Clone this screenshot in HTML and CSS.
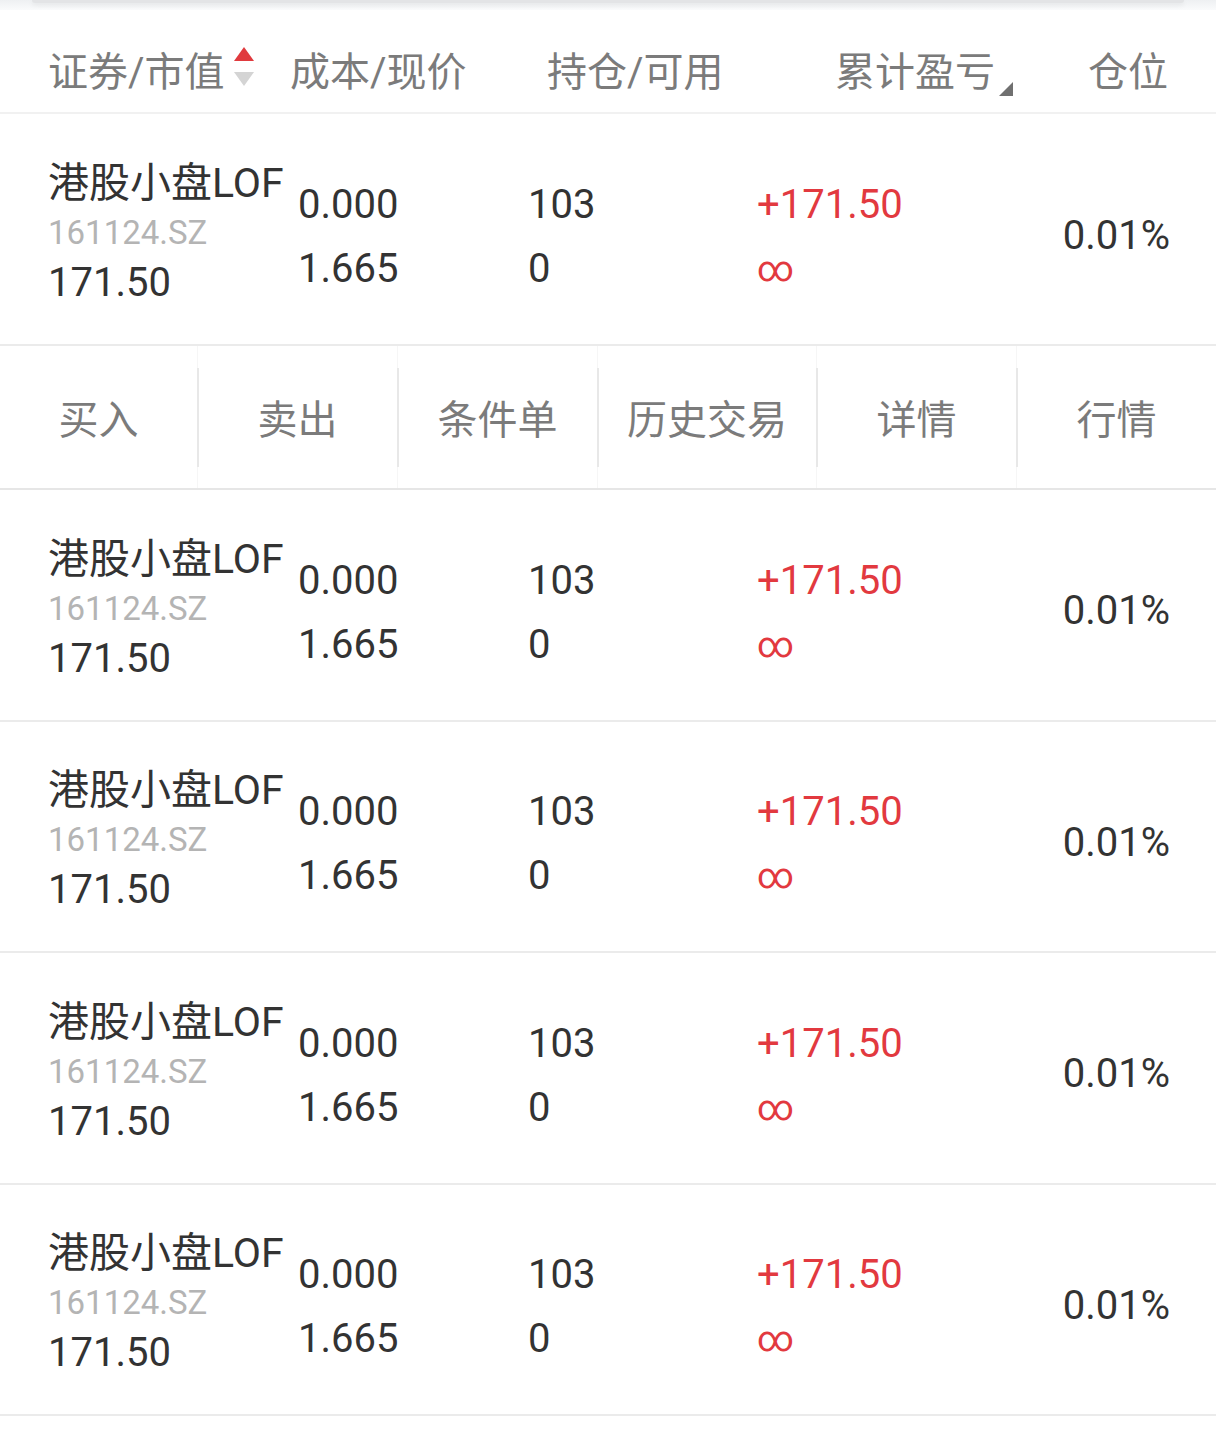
FILE: index.html
```html
<!DOCTYPE html>
<html lang="zh-CN">
<head>
    <meta charset="UTF-8">
    <meta name="viewport" content="width=device-width, initial-scale=1.0">
    <title>持仓</title>
    <link rel="stylesheet" href="styles.css">
</head>
<body>
    <div class="top-edge">
        <div class="card-bottom"></div>
    </div>

    <div class="table-head">
        <div class="head-cell">
            证券/市值
            <svg class="sort-icon" width="22" height="40" viewBox="0 0 22 40">
                <polygon points="11,0 21,14 1,14" fill="#e03a3e"/>
                <polygon points="1,25 21,25 11,39" fill="#d4d4d4"/>
            </svg>
        </div>
        <div class="head-cell">成本/现价</div>
        <div class="head-cell">持仓/可用</div>
        <div class="head-cell">
            累计盈亏<svg class="corner-icon" width="14" height="14" viewBox="0 0 14 14">
                <polygon points="14,0 14,14 0,14" fill="#707070"/>
            </svg>
        </div>
        <div class="head-cell">仓位</div>
    </div>

    <div class="row first">
        <div class="col-name">
            <div class="name">港股小盘LOF</div>
            <div class="code">161124.SZ</div>
            <div class="value">171.50</div>
        </div>
        <div class="col-pair">
            <div>0.000</div>
            <div>1.665</div>
        </div>
        <div class="col-pair">
            <div>103</div>
            <div>0</div>
        </div>
        <div class="col-pair profit">
            <div>+171.50</div>
            <div class="inf">∞</div>
        </div>
        <div class="col-ratio">0.01%</div>
    </div>

    <div class="actions">
        <div class="action">买入</div>
        <div class="action">卖出</div>
        <div class="action">条件单</div>
        <div class="action">历史交易</div>
        <div class="action">详情</div>
        <div class="action">行情</div>
    </div>

    <div class="row">
        <div class="col-name">
            <div class="name">港股小盘LOF</div>
            <div class="code">161124.SZ</div>
            <div class="value">171.50</div>
        </div>
        <div class="col-pair">
            <div>0.000</div>
            <div>1.665</div>
        </div>
        <div class="col-pair">
            <div>103</div>
            <div>0</div>
        </div>
        <div class="col-pair profit">
            <div>+171.50</div>
            <div class="inf">∞</div>
        </div>
        <div class="col-ratio">0.01%</div>
    </div>

    <div class="row">
        <div class="col-name">
            <div class="name">港股小盘LOF</div>
            <div class="code">161124.SZ</div>
            <div class="value">171.50</div>
        </div>
        <div class="col-pair">
            <div>0.000</div>
            <div>1.665</div>
        </div>
        <div class="col-pair">
            <div>103</div>
            <div>0</div>
        </div>
        <div class="col-pair profit">
            <div>+171.50</div>
            <div class="inf">∞</div>
        </div>
        <div class="col-ratio">0.01%</div>
    </div>

    <div class="row">
        <div class="col-name">
            <div class="name">港股小盘LOF</div>
            <div class="code">161124.SZ</div>
            <div class="value">171.50</div>
        </div>
        <div class="col-pair">
            <div>0.000</div>
            <div>1.665</div>
        </div>
        <div class="col-pair">
            <div>103</div>
            <div>0</div>
        </div>
        <div class="col-pair profit">
            <div>+171.50</div>
            <div class="inf">∞</div>
        </div>
        <div class="col-ratio">0.01%</div>
    </div>

    <div class="row">
        <div class="col-name">
            <div class="name">港股小盘LOF</div>
            <div class="code">161124.SZ</div>
            <div class="value">171.50</div>
        </div>
        <div class="col-pair">
            <div>0.000</div>
            <div>1.665</div>
        </div>
        <div class="col-pair">
            <div>103</div>
            <div>0</div>
        </div>
        <div class="col-pair profit">
            <div>+171.50</div>
            <div class="inf">∞</div>
        </div>
        <div class="col-ratio">0.01%</div>
    </div>
</body>
</html>
```

FILE: styles.css
```css
body {
    margin: 0;
    padding: 0;
    background-color: #fff;
    font-family: Roboto, "Noto Sans CJK SC", sans-serif;
    color: #333;
}

.top-edge {
    height: 10px;
    background: linear-gradient(#eef0f2, #fafbfc);
}
.card-bottom {
    margin: 0 32px;
    height: 3px;
    background-color: #e3e4e6;
    border-radius: 0 0 12px 12px;
    box-shadow: 0 2px 5px rgba(0, 0, 0, 0.08);
}

.table-head {
    display: grid;
    grid-template-columns: 242px 257px 288px 1fr auto;
    align-items: center;
    height: 104px;
    padding: 16px 48px 0 48px;
    box-sizing: border-box;
    border-bottom: 2px solid #f1f1f1;
    font-size: 40px;
    color: #7b7b7b;
}
.head-cell {
    display: flex;
    align-items: center;
    white-space: nowrap;
}
.sort-icon {
    margin-left: 8px;
    margin-top: -4px;
}
.corner-icon {
    align-self: flex-end;
    margin-left: 4px;
    margin-bottom: 2px;
}

.row {
    display: grid;
    grid-template-columns: 250px 230px 229px 1fr auto;
    align-items: center;
    height: 231.5px;
    padding: 8px 46px 0 48px;
    box-sizing: border-box;
    border-bottom: 2px solid #ebebeb;
    font-size: 40px;
}
.row.first {
    height: 232px;
}
.col-name {
    line-height: 50px;
    white-space: nowrap;
}
.name {
    font-size: 41px;
    color: #333;
}
.code {
    font-size: 33px;
    color: #b4b4b4;
}
.value {
    color: #333;
}
.col-pair {
    line-height: 64px;
    padding-top: 8px;
}
.profit {
    color: #e2393f;
}
.inf {
    font-size: 36px;
}
.col-ratio {
    padding-top: 4px;
}

.actions {
    display: grid;
    grid-template-columns: 197px 200px 200px 219px 200px 1fr;
    height: 144px;
    border-bottom: 2px solid #e6e6e6;
    box-sizing: border-box;
    font-size: 40px;
    color: #7b7b7b;
}
.action {
    position: relative;
    display: flex;
    align-items: center;
    justify-content: center;
    border-left: 1px solid #f6f6f6;
}
.action:first-child {
    border-left: none;
}
.action:not(:first-child)::before {
    content: "";
    position: absolute;
    left: -1px;
    top: 22px;
    bottom: 21px;
    width: 2px;
    background-color: #e8e8e8;
}
```
